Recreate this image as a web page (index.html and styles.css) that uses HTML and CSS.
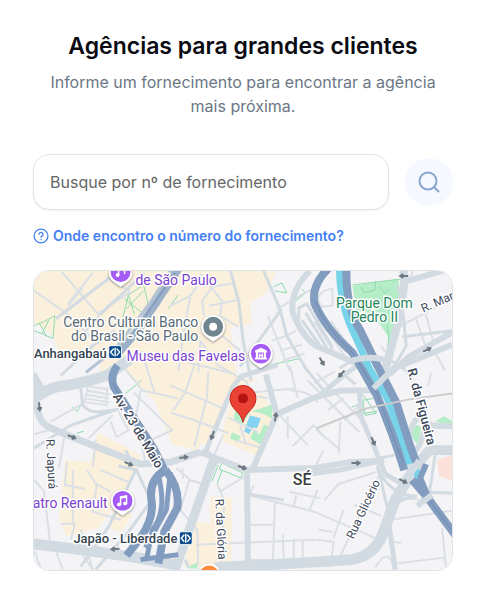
FILE: index.html
```html
<!DOCTYPE html>
<html lang="pt-BR">
<head>
  <meta charset="UTF-8">
  <meta name="viewport" content="width=device-width, initial-scale=1.0">
  <title>Agências para grandes clientes</title>
  <link rel="stylesheet" href="styles.css">
</head>
<body>

  <main class="container">
    <header class="header">
      <h1>Agências para grandes clientes</h1>
      <p>Informe um fornecimento para encontrar a agência mais próxima.</p>
    </header>

    <form class="search">
      <input type="text" name="fornecimento" placeholder="Busque por nº de fornecimento" aria-label="Número de fornecimento">
      <button type="submit" aria-label="Buscar">
        <svg width="24" height="24" viewBox="0 0 24 24">
          <circle cx="11" cy="11" r="8.5"/>
          <path d="M17.2 17.2 L21.5 21.5"/>
        </svg>
      </button>
    </form>

    <a class="help" href="#">
      <svg width="16" height="16" viewBox="0 0 16 16">
        <circle cx="8" cy="8" r="6.9"/>
        <path d="M6 6.4 A2 2 0 1 1 8.9 8.1 Q8 8.6 8 9.3"/>
        <path d="M8 11.3 V11.5"/>
      </svg>
      <span>Onde encontro o número do fornecimento?</span>
    </a>

    <div class="map">
      <svg class="map-canvas" viewBox="33 270 420 300" preserveAspectRatio="xMidYMid slice">
        <rect class="land" x="0" y="200" width="500" height="400"/>

        <!-- areas -->
        <g class="beige">
          <path d="M33 270 H276 L267 292 L250 302 L252 323 L230 327 L237 375 L258 380 L233 388 L207 446 L193 439 L170 428 L154 400 L132 380 L118 362 L100 372 L98 350 L58 352 L52 334 L33 322Z"/>
          <path d="M152 395 L178 400 L205 440 L196 450 L172 444Z"/>
          <path d="M97 432 L140 455 L136 472 L120 498 L98 528 L66 537 L58 518 L64 460 L90 462Z"/>
          <path d="M210 496 L232 498 L231 568 L183 567 L196 522 L210 524Z"/>
          <path d="M233 392 L262 392 L275 414 L256 455 L220 440Z"/>
          <path d="M112 510 L132 515 L120 533 L108 528Z"/>
        </g>
        <g class="pink">
          <path d="M438 460 L453 455 V480 L440 476Z"/>
        </g>
        <g class="green">
          <path d="M353 285 L399 278 L402 298 L391 357 L387 350 L389 336 L377 318 L368 312 L357 310Z"/>
          <path d="M436 421 L445 416 L453 421 V426Z"/>
          <path d="M235 410 L247 404 L250 412 L242 424 L234 420Z"/>
          <path d="M252 411 L273 404 L272 418 L262 413Z"/>
          <path d="M232 432 L241 436 L238 442 L230 438Z"/>
          <path d="M264 424 L270 427 L262 445 L250 438 L254 430 L260 434Z"/>
          <path d="M190 566 L197 563 V569 H188Z"/>
        </g>
        <path class="pool" d="M250 415 L261 418 L257 428 L253 427 L249 434 L244 431Z"/>

        <!-- park paths -->
        <g class="trail">
          <path d="M122 318 L128 294 L143 284 L148 304 L138 318Z M124 298 L144 314 M128 294 L134 314 M143 290 L126 308"/>
          <path d="M33 325 Q42 322 54 315 L52 338 Q42 333 33 330 M38 322 L46 336 M48 319 L41 333"/>
          <path d="M273 286 L282 282 L287 292 L275 290 M296 300 L306 292 L302 288"/>
          <path d="M353 284 L402 278 M361 286 L365 292 L376 289 L376 280 M380 285 L385 292 L391 288 M388 325 Q391 345 388 357"/>
          <path d="M363 394 L377 413 L366 415 L363 400 L374 398 M352 407 L365 402 M356 414 L378 411"/>
          <path d="M71 406 L76 411 L80 405 M76 433 L83 431 M125 393 L141 380"/>
          <path d="M222 463 L243 473 L241 478 L219 469Z M222 470 L217 484 M218 465 L212 481"/>
          <path d="M268 365 L300 358 M168 308 L178 294"/>
        </g>

        <!-- thin streets -->
        <g class="street thin">
          <path d="M61 271 L98 314 M67 305 L82 287 M33 290 L65 312 L90 336 M92 272 L67 303 M97 313 L130 291 L105 276 M85 330 L108 304"/>
          <path d="M170 305 L190 295 L203 276 M190 296 L185 322 L178 370 M170 336 L188 330 M200 273 L222 300 L220 315 L238 326"/>
          <path d="M209 305 L238 299 M204 315 L202 300 L212 286 L235 282 M222 335 L240 350 M200 340 L198 372"/>
          <path d="M170 355 L192 363 L233 373 M170 385 L223 408 M208 371 L207 396 L194 446 M170 412 L197 421 L228 433 M194 365 L185 392 L173 410"/>
          <path d="M200 340 L218 365 L246 381 M141 350 L154 392 M121 364 L142 390 L178 398 M140 390 L135 420 L145 462 M133 392 L172 430 L150 440"/>
          <path d="M277 308 L320 284 M272 340 L287 335 L296 330 M280 350 L302 344 M283 360 L305 353 M268 315 L290 370"/>
          <path d="M252 392 L295 388 M246 380 L252 395 L268 398 M290 365 L298 398 M278 413 L290 426 L308 445 M290 390 Q310 390 318 402 M288 416 L288 438 M293 446 L314 425 L326 438"/>
          <path d="M317 430 L341 450 M341 421 L339 453 M324 450 L315 468 M308 380 L360 432 M317 373 L368 426 M328 410 L344 398 M345 420 L360 405 M314 383 L335 371"/>
          <path d="M382 346 L397 365 M402 325 L453 298 M416 316 L426 344 M426 311 L434 340 M436 352 L446 370 M409 280 L414 270 M432 372 L429 386"/>
          <path d="M318 298 Q322 288 333 288 L333 305 L322 306Z M321 320 L347 358 M315 321 L338 357 M331 320 L357 356 M350 318 L363 342"/>
          <path d="M50 421 L84 402 M64 434 L58 468 M33 434 L47 430 M95 440 L92 467 M112 415 L88 438 M118 411 L128 430 L116 437 L110 421"/>
          <path d="M85 390 L110 394 M84 394 L108 398 M84 398 L109 402 M86 402 L107 405 M88 386 L108 389 M87 386 L84 402 M107 387 L105 404"/>
          <path d="M33 480 L43 491 L50 550 M66 462 L64 485 L84 489 M72 470 V525 M60 524 L74 524 L70 540 M86 470 L96 485 L92 512 L120 520 M95 484 L110 492"/>
          <path d="M34 552 L40 570 M54 549 L62 570 M78 550 L92 570 M100 470 L128 482 M80 530 L92 570"/>
          <path d="M176 468 L190 480 L206 485 M182 468 L183 479 M189 480 L180 510 L197 530 L198 566 M196 545 L315 540 M217 484 L224 500 L221 568 M219 492 L246 476"/>
          <path d="M248 495 L315 512 L382 541 M275 502 L273 562 M249 525 H275 M290 492 L320 498 M297 493 L294 506 M283 535 L284 565 M294 539 V560 H284 M303 540 V560 M248 560 L302 562 M316 540 L334 542 L332 560"/>
          <path d="M250 494 L254 485 M318 490 L310 510 M340 558 L382 470 M334 538 L344 510 M319 530 L333 532 M325 500 L339 484 L377 472 M355 505 L382 516"/>
          <path d="M391 520 L453 511 M391 512 Q400 495 420 500 M390 508 L416 495 M397 564 L445 558 M443 528 L447 568 M394 542 L402 543 M376 568 Q388 548 393 564 M428 492 L418 505"/>
          <path d="M223 435 L214 455 M240 425 L246 444 M228 417 L258 432 M236 440 L262 448"/>
        </g>

        <!-- regular streets -->
        <g class="street">
          <path d="M230 268 L239 302 L243 340 L251 380"/>
          <path d="M263 268 L280 308 L287 335 L306 368 L324 390"/>
          <path d="M282 308 L240 366 M100 313 L144 272 M55 318 L110 276 M60 375 L92 345 L114 330"/>
          <path d="M310 270 Q290 290 293 312 Q302 335 316 345 L355 362" stroke-width="6"/>
          <path d="M299 319 V307 L307 303 L333 347 M302 319 L324 350 M306 312 L330 352"/>
          <path d="M80 388 L82 405 Q90 414 104 411 L118 409 M33 448 L70 425 L128 405"/>
          <path d="M136 468 L108 527 L80 567 M133 466 L125 450 M150 502 L128 532 L95 570 M118 466 L136 470 L150 500"/>
          <path d="M188 568 L185 560 M248 494 L284 500 M342 372 L356 384"/>
          <path d="M378 465 L389 512 M388 512 Q396 498 418 496 M378 468 Q390 494 415 496 M370 460 L395 455"/>
          <path d="M340 368 Q364 350 390 360 Q404 364 413 378"/>
          <path d="M398 285 L402 295 L407 345 L390 375 M403 336 L453 330"/>
          <path d="M436 455 L430 495 M418 492 L453 493"/>
        </g>

        <!-- avenues -->
        <g class="avenue">
          <path d="M30 374 L39 390 M30 402 Q45 386 66 385 Q92 380 108 374 L130 358" stroke-width="11"/>
          <path d="M35 392 Q34 420 48 427 L74 438 L140 464 L170 462 L200 452" stroke-width="7"/>
          <path d="M278 364 L241 376 L233 386 L206 450 L217 465" stroke-width="5"/>
          <path d="M200 452 L247 470 L315 468 L350 462 L384 461" stroke-width="6"/>
          <path d="M266 374 L277 414 L253 468 M277 414 L315 397 L342 390 L375 390" stroke-width="6"/>
          <path d="M214 458 L175 570" stroke-width="9"/>
          <path d="M247 468 L248 570" stroke-width="6"/>
          <path d="M30 544 L80 550 L130 557 L180 566" stroke-width="11"/>
          <path d="M215 568 Q310 563 352 560 Q378 556 386 527 L396 500 L419 462" stroke-width="11"/>
          <path d="M388 512 L396 570" stroke-width="5"/>
          <path d="M310 474 L340 470 L376 462 L385 462" stroke-width="5"/>
          <path d="M360 390 L362 418 L374 445 L386 474 L406 486" stroke-width="5"/>
          <path d="M404 266 L405 285 L398 325 L388 362 L375 392" stroke-width="8"/>
          <path d="M405 281 L453 267" stroke-width="6"/>
          <path d="M320 395 L345 374 L360 364" stroke-width="5"/>
          <path d="M390 374 L410 356 L453 332 M400 366 L453 344" stroke-width="6"/>
          <path d="M406 462 L411 432 Q418 408 428 425 L453 426 M406 466 L420 445 L430 420" stroke-width="6"/>
          <path d="M412 472 L430 450 L453 450" stroke-width="10"/>
        </g>
        <path class="green" d="M413 432 Q417 420 422 428 L419 443 Q412 441 413 432Z"/>

        <!-- expressways and river -->
        <path class="river" d="M340 268 Q340 306 357 338 L370 368 L388 398 Q400 434 411 464 M417 470 L421 484"/>
        <g class="highway">
          <path d="M178 268 L157 300 L137 330 L118 352" class="pale"/>
          <path d="M171 268 L151 300 L130 328 L113 350 L85 372" stroke-width="3" class="light"/>
          <path d="M117 365 Q109 375 113 386 L127 408 L153 448 L164 470"/>
          <path d="M165 470 Q148 480 151 500 Q154 518 140 538 L126 556"/>
          <path d="M165 470 Q180 488 177 508 L164 532 L158 564"/>
          <path d="M157 472 Q168 510 152 530 L146 560" stroke-width="5"/>
          <path d="M170 472 L166 510 L145 548 M178 555 L140 560" stroke-width="5"/>
          <path d="M329 267 Q311 285 315 303 Q326 328 353 352 L377 394 Q394 434 405 470"/>
          <path d="M413 480 L427 496 L456 535"/>
          <path d="M347 268 Q346 306 361 330 L378 365 L397 402 L411 446 L417 462"/>
          <path d="M427 464 L421 478 L430 499" stroke-width="6"/>
        </g>
        <g class="highway-line">
          <path d="M175 272 L134 331 M112 383 L151 448 M316 301 Q326 328 354 353 L378 394 L404 463 M427 496 L453 531"/>
        </g>
        <path class="avenue" stroke-width="6" d="M350 361 Q372 353 392 362 M374 388 L396 366 M404 486 L420 460 M418 506 L433 495"/>
        <path class="rail" d="M317 428 L367 408 L410 399 L453 393"/>

        <!-- one-way arrows -->
        <g class="arrow">
          <path d="M0 0 H8 M5 -2 L8 0 L5 2" transform="translate(409 275) rotate(180)"/>
          <path d="M0 0 H8 M5 -2 L8 0 L5 2" transform="translate(424 351) rotate(-25)"/>
          <path d="M0 0 H8 M5 -2 L8 0 L5 2" transform="translate(320 357) rotate(60)"/>
          <path d="M0 0 H8 M5 -2 L8 0 L5 2" transform="translate(345 370) rotate(133)"/>
          <path d="M0 0 H8 M5 -2 L8 0 L5 2" transform="translate(38 402) rotate(84)"/>
          <path d="M0 0 H8 M5 -2 L8 0 L5 2" transform="translate(67 435) rotate(22)"/>
          <path d="M0 0 H8 M5 -2 L8 0 L5 2" transform="translate(124 462) rotate(22)"/>
          <path d="M0 0 H8 M5 -2 L8 0 L5 2" transform="translate(179 458) rotate(-8)"/>
          <path d="M0 0 H8 M5 -2 L8 0 L5 2" transform="translate(214 431) rotate(112)"/>
          <path d="M0 0 H8 M5 -2 L8 0 L5 2" transform="translate(275 421) rotate(-80)"/>
          <path d="M0 0 H8 M5 -2 L8 0 L5 2" transform="translate(238 466) rotate(18)"/>
          <path d="M0 0 H8 M5 -2 L8 0 L5 2" transform="translate(352 463)"/>
          <path d="M0 0 H8 M5 -2 L8 0 L5 2" transform="translate(372 437) rotate(66)"/>
          <path d="M0 0 H8 M5 -2 L8 0 L5 2" transform="translate(400 479) rotate(28)"/>
          <path d="M0 0 H8 M5 -2 L8 0 L5 2" transform="translate(119 549) rotate(175)"/>
        </g>

        <!-- labels -->
        <g class="label place">
          <text x="135" y="284">de São Paulo</text>
          <text x="126" y="360">Museu das Favelas</text>
          <text x="107" y="508" text-anchor="end">atro Renault</text>
        </g>
        <g class="label culture" text-anchor="end">
          <text x="198" y="326">Centro Cultural Banco</text>
          <text x="198" y="340">do Brasil - São Paulo</text>
        </g>
        <g class="label park" text-anchor="middle">
          <text x="375" y="307">Parque Dom</text>
          <text x="375" y="321">Pedro II</text>
        </g>
        <g class="label station" text-anchor="end">
          <text x="106" y="357">Anhangabaú</text>
          <text x="177" y="543">Japão - Liberdade</text>
        </g>
        <text class="label district" x="293" y="485">SÉ</text>
        <g class="label road">
          <text class="big" transform="translate(112 396) rotate(59)">Av. 23 de Maio</text>
          <text class="big" transform="translate(408 369) rotate(75)">R. da Figueira</text>
          <text transform="translate(424 312) rotate(-24)">R. Mari</text>
          <text transform="translate(45 439) rotate(87)">R. Japurá</text>
          <text transform="translate(215 499) rotate(87)">R. da Glória</text>
          <text transform="translate(354 540) rotate(-65)">Rua Glicério</text>
        </g>

        <!-- metro signs -->
        <g class="metro" transform="translate(108 345)">
          <rect width="13" height="13" rx="2"/>
          <path d="M5 3 L2 6.500 L5 10 M8 3 L11 6.500 L8 10 M6.500 2 V11"/>
        </g>
        <g class="metro" transform="translate(179 532)">
          <rect width="13" height="13" rx="2"/>
          <path d="M5 3 L2 6.500 L5 10 M8 3 L11 6.500 L8 10 M6.500 2 V11"/>
        </g>

        <!-- points of interest -->
        <g class="poi" transform="translate(120 271)">
          <path class="rim" d="M0 15 L-7 10 A12 12 0 1 1 7 10Z"/>
          <circle class="violet" r="10"/>
          <path class="glyph" d="M-2 3 V-4 L4 -5 V2"/>
          <circle class="dot" cx="-3" cy="3" r="2"/>
        </g>
        <g class="poi" transform="translate(213 326)">
          <path class="rim" d="M0 15 L-7 10 A12 12 0 1 1 7 10Z"/>
          <circle class="slate" r="10"/>
          <circle class="dot" r="4"/>
        </g>
        <g class="poi" transform="translate(261 353)">
          <path class="rim" d="M0 15 L-7 10 A12 12 0 1 1 7 10Z"/>
          <circle class="violet" r="10"/>
          <path class="dot" d="M0 -6 L6 -3 V-1 H-6 V-3Z M-5 -1 H-3 V4 H-5Z M3 -1 H5 V4 H3Z M-6 4 H6 V6 H-6Z"/>
          <path class="glyph" d="M-1.500 0 V4 M1.500 0 V4 M-1.500 2 H1.500"/>
        </g>
        <g class="poi" transform="translate(122 501)">
          <path class="rim" d="M0 15 L-7 10 A12 12 0 1 1 7 10Z"/>
          <circle class="violet" r="10"/>
          <path class="glyph" d="M-2 4 V-4 L4 -5 V3 M-2 -3 L4 -4"/>
          <circle class="dot" cx="-3.500" cy="3.500" r="2"/>
          <circle class="dot" cx="2.500" cy="2.500" r="2"/>
        </g>
        <g class="poi" transform="translate(209 576)">
          <circle class="rim" r="12"/>
          <circle class="orange" r="10"/>
        </g>

        <!-- selected agency -->
        <g class="marker">
          <path class="body" d="M243 422 C241 411 230 409 230 398 A13 13 0 0 1 256 398 C256 409 245 411 243 422Z"/>
          <circle cx="243" cy="398" r="5"/>
        </g>
      </svg>
    </div>
  </main>

</body>
</html>
```
FILE: styles.css
```css
* {
  box-sizing: border-box;
}

body {
  font-family: Inter, "Liberation Sans", sans-serif;
  background-color: #fff;
  margin: 0;
}

.container {
  padding: 30px 32px 26px 33px;
}

.header {
  text-align: center;
  margin-bottom: 36px;
}

h1 {
  font-size: 23px;
  font-weight: 600;
  line-height: 32px;
  color: #0b0b12;
  margin: 0 0 8px;
}

.header p {
  font-size: 16px;
  line-height: 24px;
  color: #6b7785;
  margin: 0;
}

.search {
  display: flex;
  align-items: center;
  gap: 16px;
  margin-bottom: 16px;
}

.search input {
  flex: 1;
  min-width: 0;
  height: 56px;
  padding: 0 16px;
  font-family: inherit;
  font-size: 16px;
  color: #333;
  background-color: #fff;
  border: 1px solid #e2e3e5;
  border-radius: 16px;
  box-shadow: 0 1px 2px rgba(0, 0, 0, 0.05);
}

.search input::placeholder {
  color: #666;
  opacity: 1;
}

.search button {
  display: flex;
  align-items: center;
  justify-content: center;
  width: 48px;
  height: 48px;
  padding: 0;
  border: none;
  border-radius: 50%;
  background-color: #f5f9ff;
  cursor: pointer;
}

.search svg,
.help svg {
  fill: none;
  stroke-linecap: round;
}

.search svg {
  stroke: #8ba3cf;
  stroke-width: 2;
}

.help {
  display: flex;
  align-items: center;
  gap: 4px;
  font-size: 14px;
  font-weight: 600;
  line-height: 20px;
  color: #4580f5;
  text-decoration: none;
  margin-bottom: 24px;
}

.help svg {
  stroke: #4580f5;
  stroke-width: 1.3;
}

.map {
  border: 1px solid #dfe3e6;
  border-radius: 16px;
  overflow: hidden;
}

.map-canvas {
  display: block;
  width: 100%;
  font-family: Roboto, "Liberation Sans", sans-serif;
}

.land { fill: #f4f3f5; }
.beige { fill: #fbf0dc; }
.pink { fill: #fce0da; }
.green { fill: #b4edc8; }
.pool { fill: #84d3f2; }

.trail {
  fill: none;
  stroke: #8edbaa;
  stroke-width: 1;
}

.street,
.avenue {
  fill: none;
  stroke: #d3dbe2;
  stroke-linejoin: round;
}

.street { stroke-width: 3; }

.thin {
  stroke: #dae0e6;
  stroke-width: 2;
}

.river {
  fill: none;
  stroke: #77d3e8;
  stroke-width: 7;
}

.highway {
  fill: none;
  stroke: #829dbf;
  stroke-width: 8;
  stroke-linejoin: round;
}

.highway .light { stroke: #b4c4d5; }
.highway .pale { stroke: #9db1ca; }

.highway-line {
  fill: none;
  stroke: #6f8bb3;
  stroke-width: 1;
}

.rail {
  fill: none;
  stroke: #cbcccd;
  stroke-width: 2;
}

.arrow {
  fill: none;
  stroke: #6d7880;
  stroke-width: 2;
}

.label {
  font-size: 14px;
  paint-order: stroke;
  stroke: #fff;
  stroke-width: 3;
  stroke-linejoin: round;
}

.place { fill: #7b42cf; }
.culture { fill: #5a6b75; }
.park { fill: #26855a; }

.station {
  font-size: 13px;
  font-weight: 500;
  fill: #344450;
}

.district {
  font-size: 16px;
  font-weight: 500;
  fill: #3b3d40;
}

.road {
  font-size: 12px;
  fill: #3d4a5c;
}

.road .big {
  font-size: 13px;
  font-weight: 500;
}

.metro rect {
  fill: #0b4d8c;
  stroke: #fff;
}

.metro path {
  fill: none;
  stroke: #fff;
  stroke-width: 1.4;
}

.rim {
  fill: #fff;
  filter: drop-shadow(0 1px 1px rgba(0, 0, 0, 0.4));
}

.violet { fill: #a55cf5; }
.slate { fill: #708690; }
.orange { fill: #ff8a3c; }
.dot { fill: #fff; }

.glyph {
  fill: none;
  stroke: #fff;
  stroke-width: 1.5;
}

.marker .body {
  fill: #ea4335;
  stroke: #c5221f;
  stroke-width: 1;
}

.marker circle { fill: #b31412; }
```
